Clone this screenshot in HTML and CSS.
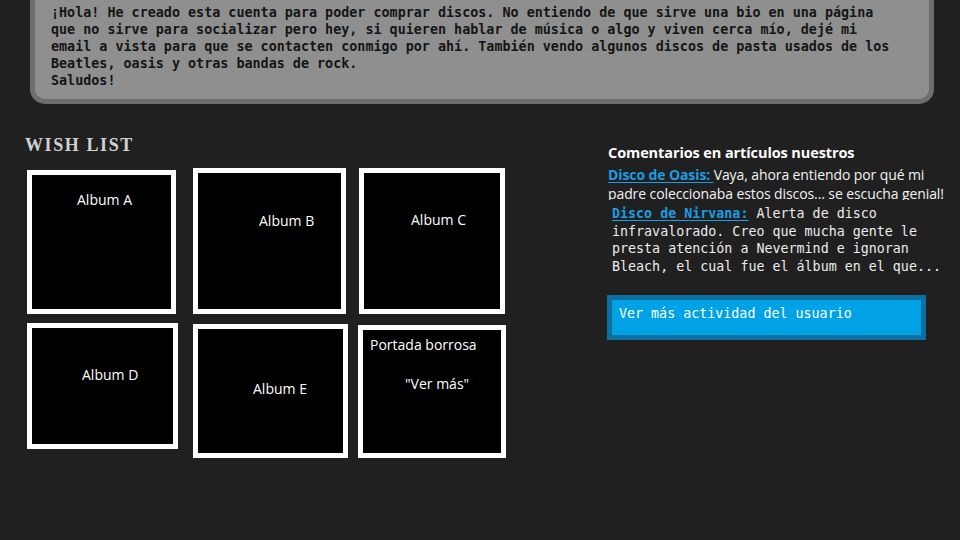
FILE: index.html
```html
<!DOCTYPE html>
<html lang="es">
<head>
<meta charset="utf-8">
<title>Perfil</title>
<link rel="stylesheet" href="styles.css">
</head>
<body>
<section class="bio">
<p class="bio-text">¡Hola! He creado esta cuenta para poder comprar discos. No entiendo de que sirve una bio en una página<br>que no sirve para socializar pero hey, si quieren hablar de música o algo y viven cerca mío, dejé mi<br>email a vista para que se contacten conmigo por ahí. También vendo algunos discos de pasta usados de los<br>Beatles, oasis y otras bandas de rock.<br>Saludos!</p>
</section>
<main class="main">
  <section class="wishlist">
    <h2 class="wish-title">Wish List</h2>
    <div class="albums">
      <div class="album album-a"><span class="label">Album A</span></div>
      <div class="album album-b"><span class="label">Album B</span></div>
      <div class="album album-c"><span class="label">Album C</span></div>
      <div class="album album-d"><span class="label">Album D</span></div>
      <div class="album album-e"><span class="label">Album E</span></div>
      <div class="album album-f"><span class="label">Portada borrosa</span><span class="label label-more">"Ver más"</span></div>
    </div>
  </section>
  <aside class="activity">
    <h3 class="activity-title">Comentarios en artículos nuestros</h3>
    <p class="comment-oasis"><a class="link link-bold" href="#">Disco de Oasis: </a>Vaya, ahora entiendo por qué mi padre coleccionaba estos discos... se escucha genial!</p>
    <p class="comment-nirvana"><a class="link link-bold" href="#">Disco de Nirvana:</a> Alerta de disco infravalorado. Creo que mucha gente le presta atención a Nevermind e ignoran Bleach, el cual fue el álbum en el que...</p>
    <a class="more-btn" href="#">Ver más actividad del usuario</a>
  </aside>
</main>
</body>
</html>
```
FILE: styles.css
```css
html, body {
  margin: 0;
  padding: 0;
  background: #202020;
  height: 100%;
  overflow: hidden;
}

.bio {
  margin: 0 26px 0 30px;
  background: #8f8f8f;
  border: 5px solid #6e6e6e;
  border-top: 0;
  border-radius: 0 0 15px 15px;
  padding: 4px 10px 10px 16px;
}

.bio-text {
  margin: 0;
  font-family: "DejaVu Sans Mono", monospace;
  font-weight: bold;
  font-size: 13.4px;
  line-height: 17px;
  color: #151515;
  white-space: nowrap;
}

.main {
  display: flex;
  padding: 30px 0 0 25px;
}

.wishlist {
  width: 582px;
}

.wish-title {
  margin: 0 0 12px 0;
  font-family: "Liberation Serif", serif;
  font-weight: bold;
  font-size: 18px;
  line-height: 22px;
  letter-spacing: 1.6px;
  text-transform: uppercase;
  color: #d0d0d0;
}

.albums {
  display: grid;
  grid-template-columns: 166px 166px 166px;
  align-items: start;
  padding-left: 2px;
}

.album {
  box-sizing: border-box;
  background: #000;
  border: 5px solid #fff;
  display: flex;
  flex-direction: column;
  align-items: flex-start;
}

.label {
  font-family: "Open Sans", "Noto Sans", sans-serif;
  font-size: 14px;
  line-height: 19px;
  color: #fff;
  white-space: nowrap;
}

.album-a { width: 149px; height: 144px; margin-top: 2px; padding: 15px 0 0 45px; }
.album-b { width: 153px; height: 146px; padding: 38px 0 0 61px; }
.album-c { width: 146px; height: 146px; padding: 37px 0 0 47px; }
.album-d { width: 151px; height: 126px; margin-top: 9px; padding: 37px 0 0 50px; }
.album-e { width: 155px; height: 134px; margin-top: 10px; padding: 50px 0 0 55px; }
.album-f { width: 148px; height: 133px; margin-top: 11px; margin-left: -1px; padding: 5px 0 0 7px; }
.label-more { margin: 20px 0 0 35px; }

.activity {
  width: 345px;
  padding-top: 9px;
}

.activity-title {
  margin: 0 0 0 1px;
  font-family: "Open Sans", "Noto Sans", sans-serif;
  font-weight: bold;
  font-size: 14.5px;
  line-height: 20px;
  color: #fff;
  letter-spacing: -0.1px;
}

.comment-oasis {
  margin: 2px 0 0 1px;
  height: 35px;
  overflow: hidden;
  font-family: "Open Sans", "Noto Sans", sans-serif;
  font-size: 14px;
  line-height: 19px;
  color: #f2f2f2;
  width: 345px;
  letter-spacing: -0.1px;
}

.link {
  color: #1c9ce2;
  text-decoration: underline;
  text-underline-offset: 2px;
}

.link-bold {
  font-weight: bold;
}

.comment-nirvana {
  margin: 5px 0 0 5px;
  font-family: "DejaVu Sans Mono", monospace;
  font-size: 13.33px;
  line-height: 17.5px;
  color: #ececec;
  width: 335px;
}

.more-btn {
  display: block;
  box-sizing: border-box;
  width: 319px;
  height: 45px;
  margin-top: 20px;
  background: #00a2e6;
  border: 5px solid #0b6fa2;
  padding: 5px 0 0 7px;
  font-family: "DejaVu Sans Mono", monospace;
  font-size: 13.33px;
  line-height: 17px;
  color: #fff;
  text-decoration: none;
}
```
